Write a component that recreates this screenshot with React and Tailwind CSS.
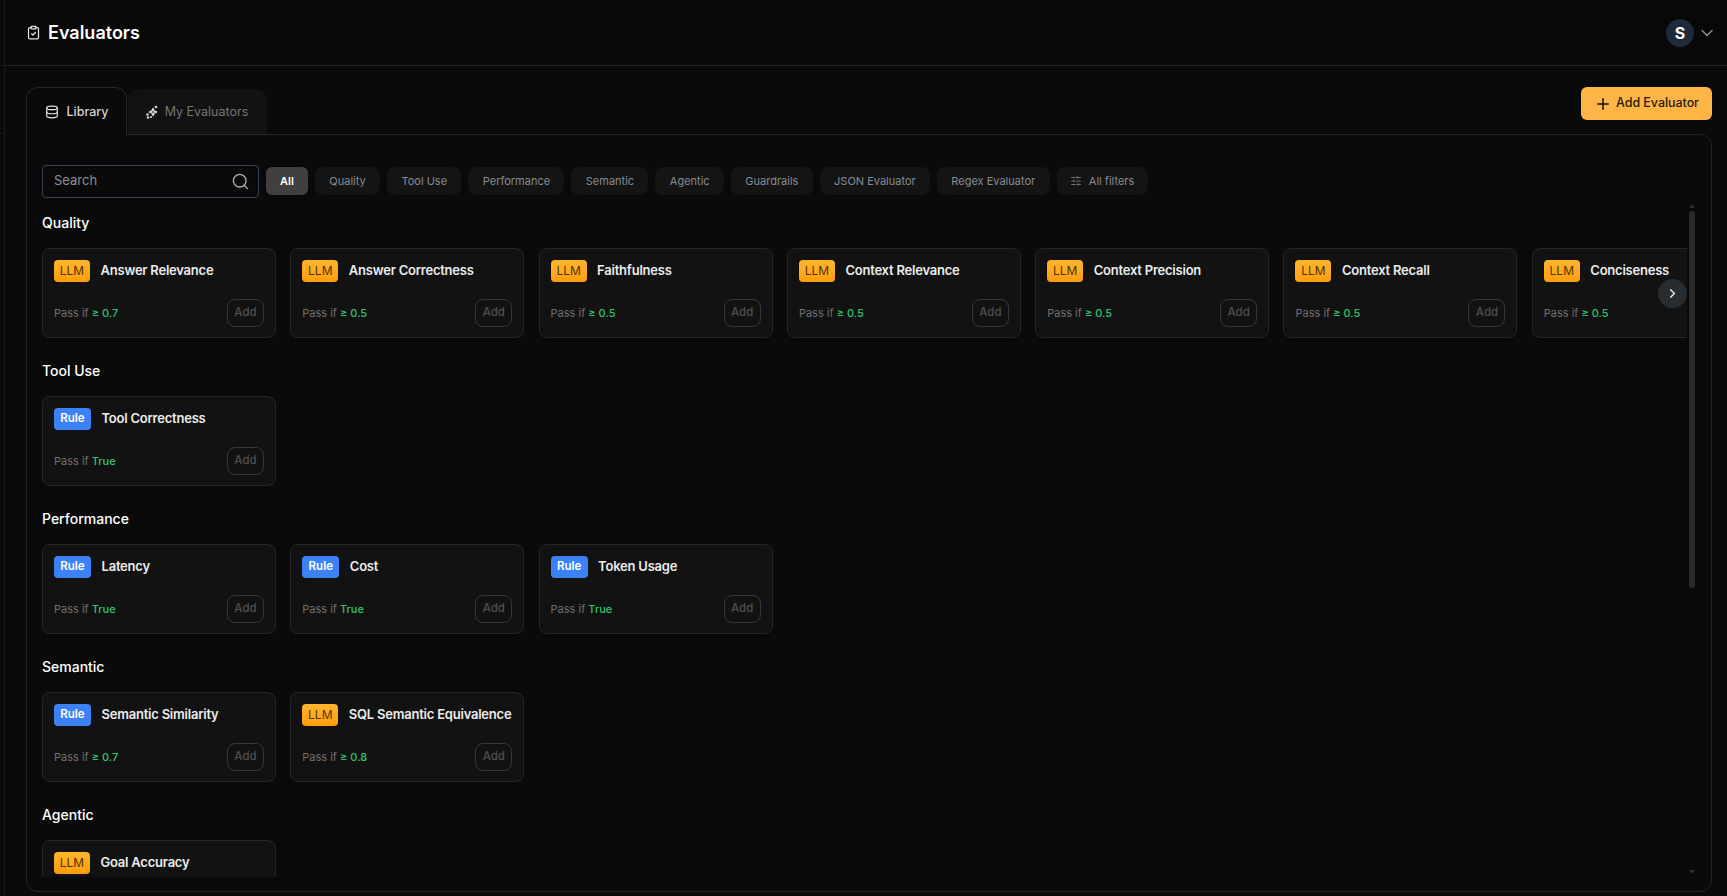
import React from 'react';
import { ClipboardCheck, ChevronDown, ChevronRight, Database, Plus, Search, SlidersHorizontal } from 'lucide-react';

const sections = [
    {
        title: 'Quality',
        items: [
            { kind: 'LLM', name: 'Answer Relevance', pass: '≥ 0.7' },
            { kind: 'LLM', name: 'Answer Correctness', pass: '≥ 0.5' },
            { kind: 'LLM', name: 'Faithfulness', pass: '≥ 0.5' },
            { kind: 'LLM', name: 'Context Relevance', pass: '≥ 0.5' },
            { kind: 'LLM', name: 'Context Precision', pass: '≥ 0.5' },
            { kind: 'LLM', name: 'Context Recall', pass: '≥ 0.5' },
            { kind: 'LLM', name: 'Conciseness', pass: '≥ 0.5' },
        ],
    },
    { title: 'Tool Use', items: [{ kind: 'Rule', name: 'Tool Correctness', pass: 'True' }] },
    {
        title: 'Performance',
        items: [
            { kind: 'Rule', name: 'Latency', pass: 'True' },
            { kind: 'Rule', name: 'Cost', pass: 'True' },
            { kind: 'Rule', name: 'Token Usage', pass: 'True' },
        ],
    },
    {
        title: 'Semantic',
        items: [
            { kind: 'Rule', name: 'Semantic Similarity', pass: '≥ 0.7' },
            { kind: 'LLM', name: 'SQL Semantic Equivalence', pass: '≥ 0.8' },
        ],
    },
    { title: 'Agentic', items: [{ kind: 'LLM', name: 'Goal Accuracy', pass: '≥ 0.7' }] },
];

const chips = ['Quality', 'Tool Use', 'Performance', 'Semantic', 'Agentic', 'Guardrails', 'JSON Evaluator', 'Regex Evaluator'];

const SparkIcon = () => (
    <svg width="14" height="14" viewBox="0 0 14 14" fill="none" stroke="currentColor" strokeWidth="1.6" strokeLinejoin="round">
        <path d="M8 3.5 9 6l2.5 1L9 8l-1 2.5L7 8 4.5 7 7 6z" />
        <circle cx="11" cy="2" r="1.3" fill="currentColor" stroke="none" />
        <circle cx="2.5" cy="9.5" r="1.3" fill="currentColor" stroke="none" />
        <circle cx="3" cy="12.5" r="1.3" fill="currentColor" stroke="none" />
        <circle cx="6" cy="12" r="1.1" fill="currentColor" stroke="none" />
    </svg>
);

const Card = ({ kind, name, pass }) => (
    <div className="w-[234px] h-[90px] shrink-0 flex flex-col justify-between bg-[#121212] border border-[#262626] rounded-lg pl-[11px] pr-[11px] pt-[11px] pb-[10px]">
        <div className="flex items-center gap-[10.5px]">
            {kind === 'LLM' ? (
                <span className="w-[36px] h-[22px] shrink-0 flex items-center justify-center rounded-[4px] bg-gradient-to-b from-[#ffb52e] to-[#ff9d0a] text-[#4f3404] text-xs">LLM</span>
            ) : (
                <span className="w-[37px] h-[22px] shrink-0 flex items-center justify-center rounded-[4px] bg-[#3b82f6] text-white text-[11.5px] font-semibold">Rule</span>
            )}
            <span className="text-[13px] font-semibold tracking-[-0.22px] text-[#ececec] whitespace-nowrap">{name}</span>
        </div>
        <div className="flex items-center justify-between">
            <span className="text-[11px] text-[#6f6f6f]">
                Pass if <span className="font-medium text-[#2fc46c]">{pass}</span>
            </span>
            <button className="w-[37px] h-[28px] flex items-center justify-center rounded-lg border border-[#363636] text-[11.5px] font-medium text-[#4f4f4f]">Add</button>
        </div>
    </div>
);

const Section = ({ title, items }) => (
    <section>
        <h2 className="h-[20px] leading-[20px] text-sm font-medium text-white mb-[15px]">{title}</h2>
        <div className="relative">
            <div className="flex gap-[14.3px] overflow-hidden">
                {items.map((item) => (
                    <Card key={item.name} {...item} />
                ))}
            </div>
            {items.length > 6 && (
                <button className="absolute right-0 top-[31px] w-[29px] h-[29px] rounded-full bg-[#262c30] flex items-center justify-center text-[#f0f0f0]">
                    <ChevronRight size={15} strokeWidth={2} />
                </button>
            )}
        </div>
    </section>
);

const App = () => {
    return (
        <div className="flex w-full h-[896px] overflow-hidden bg-[#0a0a0a] font-['Inter',sans-serif]">
            {/* Sidebar sliver */}
            <div className="w-[5px] shrink-0 border-r border-[#1a1a1a]">
                <div className="h-[66px] border-b border-[#1a1a1a]"></div>
                <div className="h-[68px] border-b border-[#1a1a1a]"></div>
            </div>

            <div className="flex-1 min-w-0 flex flex-col">
                {/* Header */}
                <header className="h-[66px] shrink-0 border-b border-[#1e2630] bg-[#080808] flex items-center justify-between pl-[21px] pr-[10px]">
                    <div className="flex items-center gap-[7px]">
                        <ClipboardCheck size={15} className="text-[#e5e5e5]" />
                        <span className="text-lg font-semibold text-white">Evaluators</span>
                    </div>
                    <div className="flex items-center gap-[3px]">
                        <div className="w-[28px] h-[28px] rounded-full bg-[#1e293b] flex items-center justify-center text-base font-bold text-white">S</div>
                        <ChevronDown size={20} strokeWidth={1.8} className="text-[#8a8a8a]" />
                    </div>
                </header>

                {/* Tabs row */}
                <div className="flex-1 min-h-0 flex flex-col pl-[21px] pr-[15px] pt-[21px] pb-[4px]">
                    <div className="flex items-start justify-between shrink-0 h-[48px] -mb-px">
                        <div className="flex items-end h-full gap-px">
                            <button className="relative z-10 w-[101px] h-full flex items-center justify-center gap-[7px] pt-px pl-px rounded-t-[12px] border border-b-0 border-[#262626] bg-[#0a0a0a] text-[12.5px] font-medium text-[#d4d4d4]">
                                <Database size={14} className="text-[#e5e5e5]" />
                                Library
                            </button>
                            <button className="w-[139px] h-[46px] flex items-center justify-center gap-[6px] pr-[2px] rounded-t-[12px] bg-[#121212] text-[12.5px] text-[#757575]">
                                <span className="text-[#d4d4d4]"><SparkIcon /></span>
                                My Evaluators
                            </button>
                        </div>
                        <button className="h-[33px] w-[131px] flex items-center justify-center gap-[4px] rounded-md bg-[#ffb545] text-[12.4px] font-medium text-[#1f1a12]">
                            <Plus size={18} className="text-[#111]" />
                            Add Evaluator
                        </button>
                    </div>

                    {/* Panel */}
                    <div className="flex-1 min-h-0 flex flex-col border border-[#262626] rounded-b-[12px] rounded-tr-[12px] pl-[15px] pr-[16px] pt-[29px] pb-[14px]">
                        <div className="flex items-center gap-[7px] shrink-0 h-[34px]">
                            <div className="w-[217px] h-[33px] flex items-center justify-between rounded-[4px] border border-[#334155] pl-[11px] pr-[8px]">
                                <span className="text-[13px] text-[#8a8f96]">Search</span>
                                <Search size={19} strokeWidth={1.7} className="text-[#b0b0b0]" />
                            </div>
                            <button className="w-[42px] h-[28px] rounded-md bg-[#404040] text-[11px] font-semibold text-white">All</button>
                            {chips.map((chip) => (
                                <button key={chip} className="h-[28px] px-[14.35px] rounded-lg bg-[#141414] text-[11px] text-[#858c94] whitespace-nowrap">{chip}</button>
                            ))}
                            <button className="h-[28px] w-[91px] flex items-center justify-center gap-[7px] rounded-lg bg-[#141414] text-[11px] text-[#858c94]">
                                <SlidersHorizontal size={12} className="text-[#6f6f6f]" />
                                All filters
                            </button>
                        </div>

                        <div className="flex-1 min-h-0 flex gap-[2px] mt-[4px]">
                            <div className="flex-1 min-w-0 overflow-hidden flex flex-col gap-[23px] pt-[11px]">
                                {sections.map((section) => (
                                    <Section key={section.title} {...section} />
                                ))}
                            </div>
                            {/* Scrollbar */}
                            <div className="w-[6px] shrink-0 flex flex-col items-center pt-[2px]">
                                <div className="w-0 h-0 border-x-[3px] border-x-transparent border-b-[4px] border-b-[#2e2e2e]"></div>
                                <div className="w-[6px] h-[377px] mt-[3px] rounded-full bg-[#2a2a2a]"></div>
                                <div className="flex-1"></div>
                                <div className="w-0 h-0 border-x-[3px] border-x-transparent border-t-[4px] border-t-[#2e2e2e] mb-[3px]"></div>
                            </div>
                        </div>
                    </div>
                </div>
            </div>
        </div>
    );
};

export default App;
